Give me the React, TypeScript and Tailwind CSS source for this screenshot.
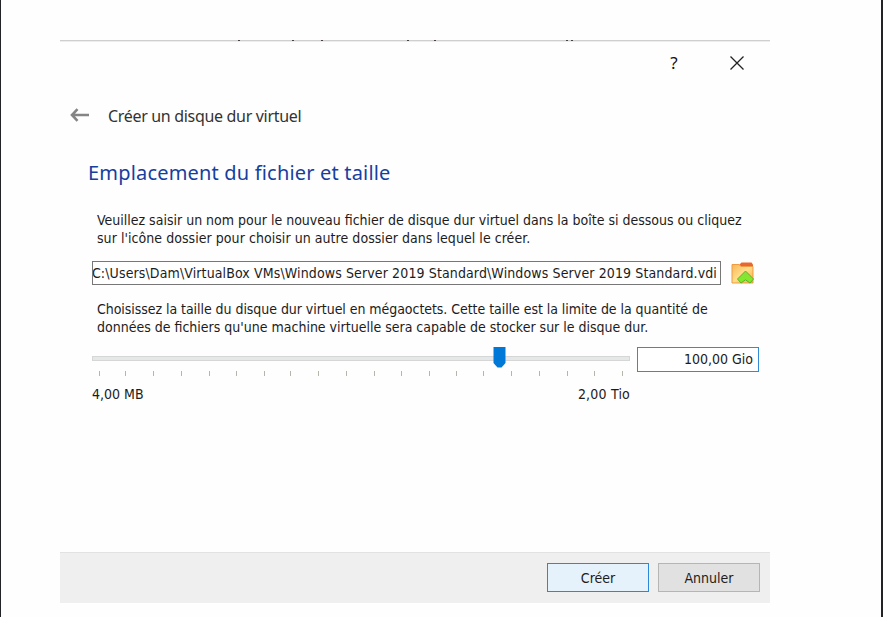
const ticks = [99, 125, 153, 181, 209, 236, 264, 290, 318, 346, 374, 401, 429, 456, 483, 511, 539, 567, 594, 622];
const specks = [239, 293, 322, 408, 435, 567, 572];

function TitleBar() {
  return (
    <header className="flex h-[42px] items-center justify-end pr-[25px]">
      <button className="mb-[2px] w-[12px] text-center font-['Noto_Sans',sans-serif] text-[17px] leading-none text-[#111]">?</button>
      <button aria-label="Fermer" className="ml-[49px]">
        <svg width="16" height="16" viewBox="0 0 16 16" fill="none" stroke="#222" strokeWidth="1.3">
          <path d="M1.500 1.500 14.500 14.500M14.500 1.500 1.500 14.500" />
        </svg>
      </button>
    </header>
  );
}

function FolderIcon() {
  return (
    <svg width="24" height="24" viewBox="0 0 24 24">
      <defs>
        <linearGradient id="folder" x1="0" y1="0" x2="1" y2="1">
          <stop offset="0" stopColor="#f9b65a" />
          <stop offset="0.5" stopColor="#ffdf88" />
          <stop offset="1" stopColor="#f9a94a" />
        </linearGradient>
        <linearGradient id="chevron" x1="0" y1="0" x2="0" y2="1">
          <stop offset="0" stopColor="#8edc40" />
          <stop offset="1" stopColor="#7cf020" />
        </linearGradient>
      </defs>
      <path d="M8 4 10.500 1.500H20.500L22 3.500V8H8Z" fill="#e9662f" />
      <path d="M1 3.500H8L10 5.500H22V22H1Z" fill="url(#folder)" stroke="#ef9b45" strokeWidth="1" />
      <path d="M14.500 10 22.500 18 19 22 14.500 18.800 10 22 6.500 18Z" fill="url(#chevron)" stroke="#5fb02a" strokeWidth="1" strokeLinejoin="round" />
    </svg>
  );
}

function Slider() {
  return (
    <div className="w-[538px]">
      <div className="relative h-[24px] pt-[9px]">
        <div className="h-[5px] border border-[#d6d6d6] bg-[#e4e8e8]" />
        <svg className="absolute left-[401px] top-0" width="13" height="21" viewBox="0 0 13 21">
          <path d="M0.500 0H12.500V16L8.500 20.500H4.500L0.500 16Z" fill="#0078d7" />
        </svg>
      </div>
      <svg className="block" width="538" height="6" viewBox="92 0 538 6">
        {ticks.map((x) => (
          <rect key={x} x={x} y="0" width="1" height="5" fill="#b5b5ab" />
        ))}
      </svg>
      <div className="mt-[8px] flex justify-between leading-[18px]">
        <span>4,00 MB</span>
        <span className="tracking-[0.2px]">2,00 Tio</span>
      </div>
    </div>
  );
}

export default function App() {
  return (
    <div className="h-[617px] w-[883px] overflow-hidden border-l border-r-2 border-[#222327] bg-[#fefefe] pl-[59px] pt-[40px]">
      <main className="flex h-[563px] w-[710px] flex-col font-['DejaVu_Sans_Condensed','DejaVu_Sans',sans-serif] text-[14px] text-[#1c1c1c]">
        <svg className="block shrink-0" width="710" height="2" viewBox="60 0 710 2">
          <rect x="60" width="710" height="1" fill="#cfcfcf" />
          <rect x="60" y="1" width="710" height="1" fill="#ededed" />
          {specks.map((x) => (
            <rect key={x} x={x - 1} width="2" height="1" fill="#4b4240" />
          ))}
        </svg>
        <TitleBar />
        <div className="mt-[16px] flex h-[30px] items-center pl-[10px] font-['Noto_Sans',sans-serif] text-[#333]">
          <svg width="20" height="14" viewBox="0 0 20 14" fill="none" stroke="#858585" strokeWidth="2.6">
            <path d="M2 7H19M7.500 1.200 2 7 7.500 12.800" />
          </svg>
          <span className="ml-[18px] mt-[2px] whitespace-nowrap text-[16px] tracking-[-0.32px]">Créer un disque dur virtuel</span>
        </div>
        <h1 className="mt-[28px] whitespace-nowrap pl-[28px] font-['Noto_Sans',sans-serif] text-[20px] leading-[30px] tracking-[0.18px] text-[#163f9f]">
          Emplacement du fichier et taille
        </h1>
        <section className="pl-[32px]">
          <p className="mt-[23px] whitespace-nowrap pl-[5px] leading-[18px]">
            <span className="block">Veuillez saisir un nom pour le nouveau fichier de disque dur virtuel dans la boîte si dessous ou cliquez</span>
            <span className="block tracking-[0.05px]">sur l'icône dossier pour choisir un autre dossier dans lequel le créer.</span>
          </p>
          <div className="mt-[14px] flex items-center">
            <div className="flex h-[24px] w-[629px] items-center justify-end overflow-hidden whitespace-nowrap border border-[#777] bg-white pr-[3px] tracking-[0.12px]">
              C:\Users\Dam\VirtualBox VMs\Windows Server 2019 Standard\Windows Server 2019 Standard.vdi
            </div>
            <button aria-label="Choisir un dossier" className="ml-[10px]"><FolderIcon /></button>
          </div>
          <p className="mt-[15px] whitespace-nowrap pl-[5px] leading-[18px]">
            <span className="block tracking-[-0.05px]">Choisissez la taille du disque dur virtuel en mégaoctets. Cette taille est la limite de la quantité de</span>
            <span className="block">données de fichiers qu'une machine virtuelle sera capable de stocker sur le disque dur.</span>
          </p>
          <div className="mt-[11px] flex">
            <Slider />
            <div className="ml-[7px] flex h-[25px] w-[122px] items-center justify-end border border-[#318bd6] bg-white pr-[5px]">100,00 Gio</div>
          </div>
        </section>
        <footer className="mt-auto flex h-[51px] gap-[9px] border-t border-[#e2e2e2] bg-[#efefef] pl-[487px] pt-[10px]">
          <button className="h-[29px] w-[102px] border border-[#2b88d8] bg-[#e5f1fb] pt-[2px]">Créer</button>
          <button className="h-[29px] w-[102px] border border-[#b5b5b5] bg-[#e1e1e1] pt-[2px]">Annuler</button>
        </footer>
      </main>
    </div>
  );
}
